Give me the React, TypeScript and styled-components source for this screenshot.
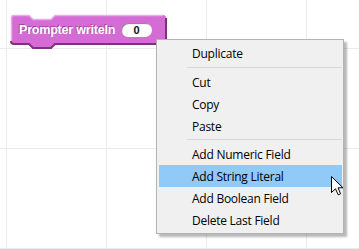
import styled, { createGlobalStyle } from "styled-components";

const GlobalStyle = createGlobalStyle`
	html, body {
		margin: 0;
		padding: 0;
		background: #ffffff;
	}
`;

const menuItems: (string | null)[] = [
	"Duplicate",
	null,
	"Cut",
	"Copy",
	"Paste",
	null,
	"Add Numeric Field",
	"Add String Literal",
	"Add Boolean Field",
	"Delete Last Field",
];

const App = () => {
	return (
		<>
			<GlobalStyle />
			<StyledCanvas>
				<StyledBlock>
					<StyledBlockShape width="158" height="36" viewBox="0 0 158 36">
						<path
							d="M1,4 Q1,1 4,1 L19,1 L23,5 L41,5 L45,1 L153,1 Q156,1 156,4 L156,27 Q156,30 153,30 L45,30 L41,34 L23,34 L19,30 L4,30 Q1,30 1,27 Z"
							fill="#d56bd5"
						/>
						<path d="M1.5,27 L1.5,4 Q1.5,1.5 4,1.5 L19,1.5 L23,5.5 L41,5.5 L45,1.5 L153,1.5" fill="none" stroke="#ebaaeb" strokeWidth="1.5" />
						<path d="M156,4 L156,27 Q156,30 153,30 L45,30 L41,34 L23,34 L19,30 L4,30 Q1,30 1,27" fill="none" stroke="#7e317e" strokeWidth="2" />
					</StyledBlockShape>
					<StyledBlockLabel>Prompter writeln</StyledBlockLabel>
					<StyledSlot>0</StyledSlot>
				</StyledBlock>

				<StyledMenu>
					{menuItems.map((item, i) =>
						item === null ? (
							<StyledSeparator key={i} />
						) : (
							<StyledMenuItem key={i} $active={item === "Add String Literal"}>
								{item}
							</StyledMenuItem>
						)
					)}
				</StyledMenu>

				<StyledCursor width="13" height="20" viewBox="0 0 13 20">
					<path d="M0.5,0.5 L0.5,16.5 L4.5,12.8 L7.2,18.8 L9.6,17.8 L7,11.8 L12,11.8 Z" fill="#ffffff" stroke="#000000" strokeWidth="1" strokeLinejoin="miter" />
				</StyledCursor>
			</StyledCanvas>
		</>
	);
};

const StyledCanvas = styled.div`
	position: relative;
	width: 359px;
	height: 249px;
	overflow: hidden;
	background-color: #ffffff;
	background-image:
		linear-gradient(to right, #ebebeb 1px, transparent 1px),
		linear-gradient(to bottom, #ebebeb 1px, transparent 1px);
	background-size: 100px 100px;
	background-position: 6px 48px;
`;

const StyledBlock = styled.div`
	position: absolute;
	left: 10px;
	top: 14px;
	width: 158px;
	height: 36px;
	display: flex;
	align-items: flex-start;
	padding: 8px 0 0 9px;
	box-sizing: border-box;
	gap: 6px;
`;

const StyledBlockShape = styled.svg`
	position: absolute;
	left: 0;
	top: 0;
`;

const StyledBlockLabel = styled.span`
	position: relative;
	font-family: "Liberation Sans", Arial, sans-serif;
	font-weight: bold;
	font-size: 12.5px;
	letter-spacing: -0.2px;
	line-height: 17px;
	color: #ffffff;
	text-shadow: -1px -1px 0 rgba(90, 20, 90, 0.45);
	white-space: nowrap;
`;

const StyledSlot = styled.span`
	position: relative;
	width: 31px;
	height: 14px;
	margin-top: 1px;
	border-radius: 7px;
	background: #ffffff;
	box-shadow: inset 1px 1px 1px rgba(60, 0, 60, 0.55);
	display: flex;
	align-items: center;
	justify-content: center;
	font-family: "Liberation Sans", Arial, sans-serif;
	font-weight: bold;
	font-size: 11px;
	color: #111111;
`;

const StyledMenu = styled.div`
	position: absolute;
	left: 156px;
	top: 39px;
	width: 188px;
	height: 195px;
	box-sizing: border-box;
	padding: 2px 1px 2px 2px;
	background: #f0f0f0;
	border: 1px solid #b4b4b4;
	box-shadow: 3px 3px 2px rgba(0, 0, 0, 0.28);
	display: flex;
	flex-direction: column;
`;

const StyledMenuItem = styled.div<{ $active?: boolean }>`
	height: 22px;
	line-height: 23px;
	padding-left: 33px;
	font-family: "Open Sans", "Noto Sans", sans-serif;
	font-size: 12px;
	letter-spacing: -0.25px;
	color: #000000;
	background: ${(p) => (p.$active ? "#91c9f7" : "transparent")};
	white-space: nowrap;
`;

const StyledSeparator = styled.div`
	height: 7px;
	margin-left: 28px;
	display: flex;
	align-items: center;

	&::after {
		content: "";
		flex: 1;
		height: 1px;
		background: #d7d7d7;
	}
`;

const StyledCursor = styled.svg`
	position: absolute;
	left: 331px;
	top: 176px;
`;

export default App;
